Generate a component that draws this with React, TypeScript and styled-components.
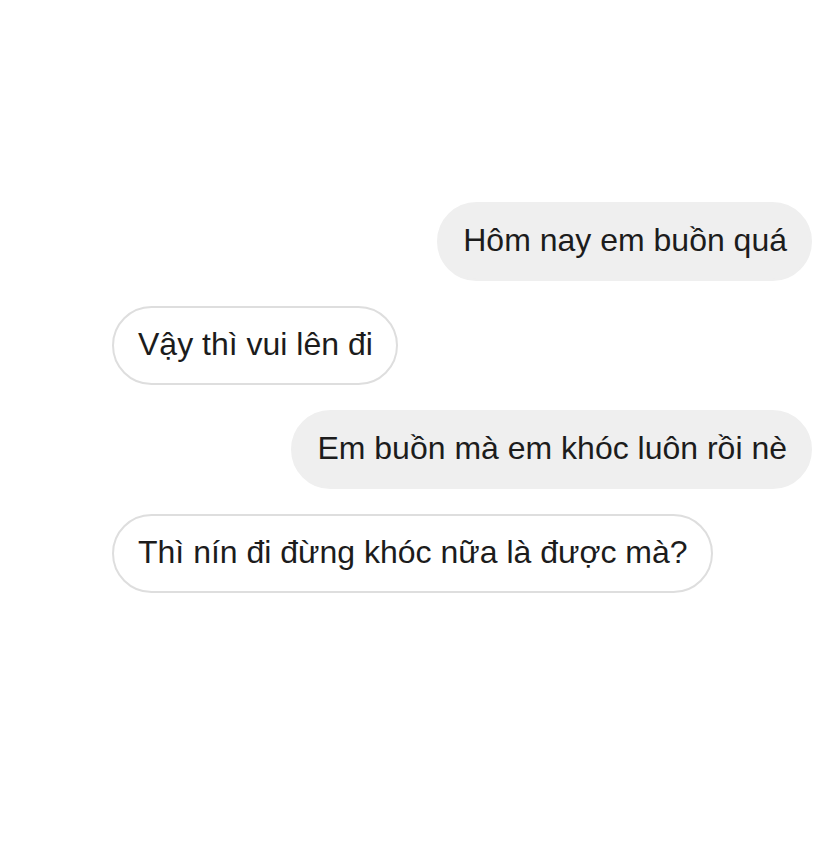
import React from "react";
import styled, { createGlobalStyle } from "styled-components";

const Global = createGlobalStyle`
  html, body { margin: 0; padding: 0; background: #ffffff; }
  body { width: 828px; height: 844px; overflow: hidden; }
`;

const Page = styled.div`
  box-sizing: border-box;
  width: 828px;
  height: 844px;
  padding: 202px 16px 0 112px;
  background: #ffffff;
  display: flex;
  flex-direction: column;
  gap: 25px;
  font-family: "Liberation Sans", Arial, sans-serif;
`;

const Row = styled.div<{ $mine: boolean }>`
  display: flex;
  justify-content: ${(p) => (p.$mine ? "flex-end" : "flex-start")};
`;

const Bubble = styled.div<{ $mine: boolean }>`
  box-sizing: border-box;
  height: 79px;
  display: flex;
  align-items: center;
  padding: 0 23px 2px 24px;
  border-radius: 40px;
  font-size: 32px;
  color: #1c1c1c;
  white-space: nowrap;
  background: ${(p) => (p.$mine ? "#efefef" : "#ffffff")};
  border: 2px solid ${(p) => (p.$mine ? "#efefef" : "#dedede")};
`;

const messages = [
  { mine: true, text: "Hôm nay em buồn quá" },
  { mine: false, text: "Vậy thì vui lên đi" },
  { mine: true, text: "Em buồn mà em khóc luôn rồi nè" },
  { mine: false, text: "Thì nín đi đừng khóc nữa là được mà?" },
];

export default function App() {
  return (
    <>
      <Global />
      <Page>
        {messages.map((m, i) => (
          <Row key={i} $mine={m.mine}>
            <Bubble $mine={m.mine}>{m.text}</Bubble>
          </Row>
        ))}
      </Page>
    </>
  );
}
